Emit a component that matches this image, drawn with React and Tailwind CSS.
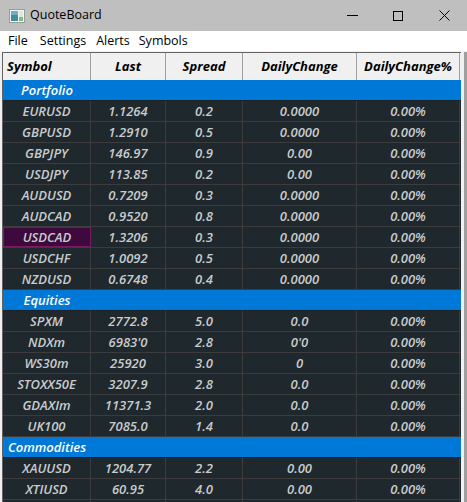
import React from 'react';

const cols = [89, 75, 77, 114, 103];

const groups = [
  {
    name: 'Portfolio',
    rows: [
      ['EURUSD', '1.1264', '0.2', '0.0000', '0.00%'],
      ['GBPUSD', '1.2910', '0.5', '0.0000', '0.00%'],
      ['GBPJPY', '146.97', '0.9', '0.00', '0.00%'],
      ['USDJPY', '113.85', '0.2', '0.00', '0.00%'],
      ['AUDUSD', '0.7209', '0.3', '0.0000', '0.00%'],
      ['AUDCAD', '0.9520', '0.8', '0.0000', '0.00%'],
      ['USDCAD', '1.3206', '0.3', '0.0000', '0.00%', true],
      ['USDCHF', '1.0092', '0.5', '0.0000', '0.00%'],
      ['NZDUSD', '0.6748', '0.4', '0.0000', '0.00%'],
    ],
  },
  {
    name: 'Equities',
    rows: [
      ['SPXM', '2772.8', '5.0', '0.0', '0.00%'],
      ['NDXm', "6983'0", '2.8', "0'0", '0.00%'],
      ['WS30m', '25920', '3.0', '0', '0.00%'],
      ['STOXX50E', '3207.9', '2.8', '0.0', '0.00%'],
      ['GDAXIm', '11371.3', '2.0', '0.0', '0.00%'],
      ['UK100', '7085.0', '1.4', '0.0', '0.00%'],
    ],
  },
  {
    name: 'Commodities',
    rows: [
      ['XAUUSD', '1204.77', '2.2', '0.00', '0.00%'],
      ['XTIUSD', '60.95', '4.0', '0.00', '0.00%'],
      ['', '', '', '', ''],
    ],
  },
];

const headers = ['Symbol', 'Last', 'Spread', 'DailyChange', 'DailyChange%'];

const font = { fontFamily: '"Open Sans", "Liberation Sans", sans-serif' };

export default function App() {
  return (
    <div className="w-[467px] h-[502px] overflow-hidden bg-[#f0f0f0] flex flex-col" style={font}>
      {/* Title bar */}
      <div className="h-[31px] bg-[#bfbfbf] flex items-center shrink-0">
        <svg width="16" height="14" viewBox="0 0 16 14" className="ml-[9px]">
          <rect x="0.5" y="0.5" width="15" height="13" fill="#f4f4f4" stroke="#9a9a9a" />
          <rect x="2" y="2" width="7" height="10" fill="#3f8f9a" />
          <rect x="2" y="2" width="7" height="4" fill="#6fb0c0" />
          <rect x="10" y="2" width="4" height="10" fill="#dfe8e0" />
          <rect x="10" y="8" width="4" height="4" fill="#7fbf7f" />
        </svg>
        <span className="ml-[5px] text-[12.5px] text-black">QuoteBoard</span>
        <div className="ml-auto flex items-center h-full">
          <div className="w-[46px] h-full flex items-center justify-center">
            <div className="w-[11px] h-px bg-black" />
          </div>
          <div className="w-[46px] h-full flex items-center justify-center">
            <div className="w-[10px] h-[10px] border border-black" />
          </div>
          <div className="w-[46px] h-full flex items-center justify-center">
            <svg width="11" height="11" viewBox="0 0 11 11">
              <path d="M0.5 0.5 L10.5 10.5 M10.5 0.5 L0.5 10.5" stroke="black" strokeWidth="1" />
            </svg>
          </div>
        </div>
      </div>

      {/* Menu bar */}
      <div className="h-[20px] bg-white flex items-center text-[12.5px] text-black shrink-0">
        <span className="ml-[8px]">File</span>
        <span className="ml-[12px]">Settings</span>
        <span className="ml-[10px]">Alerts</span>
        <span className="ml-[9px]">Symbols</span>
      </div>
      <div className="h-px bg-[#f0f0f0] shrink-0" />

      {/* Table */}
      <div className="flex flex-1 min-h-0">
        <div className="w-[2px] bg-[#f0f0f0]" />
        <div className="w-[459px] border-l border-t border-[#646464] bg-[#1f282c] overflow-hidden">
          {/* Header */}
          <div className="flex h-[27px] bg-[#f0f0f0]">
            {headers.map((h, i) => (
              <div
                key={h}
                className={`h-full flex items-center pt-px border-r border-[#a0a0a0] text-[13px] font-bold italic text-black ${i === 0 ? 'pl-[4px]' : 'justify-center'}`}
                style={{ width: cols[i] - (i === 0 ? 1 : 0) }}
              >
                {h}
              </div>
            ))}
          </div>

          {groups.map((g) => (
            <div key={g.name}>
              <div className="flex h-[21px] bg-[#0078d7] border-b border-[#1a2226]">
                <div className="flex items-center justify-center pt-[2px] text-[13px] font-semibold italic text-white" style={{ width: cols[0] - 1 }}>
                  {g.name}
                </div>
              </div>
              {g.rows.map((r, ri) => (
                <div key={ri} className="flex h-[21px] border-b border-[#3c3c3c]">
                  {r.slice(0, 5).map((c, ci) => (
                    <div
                      key={ci}
                      className={`h-full flex items-center justify-center pt-[2px] border-r text-[13px] font-semibold italic text-[#c9ccce] ${
                        ci === 0 && r[5] ? 'bg-[#3e0a3e] border border-[#7a1a60]' : 'border-[#3c3c3c]'
                      }`}
                      style={{ width: cols[ci] - (ci === 0 ? 1 : 0) }}
                    >
                      {c}
                    </div>
                  ))}
                </div>
              ))}
            </div>
          ))}
        </div>
        <div className="w-[3px] bg-[#f0f0f0]" />
        <div className="w-[3px] bg-[#9f9f9f]" />
      </div>
    </div>
  );
}
